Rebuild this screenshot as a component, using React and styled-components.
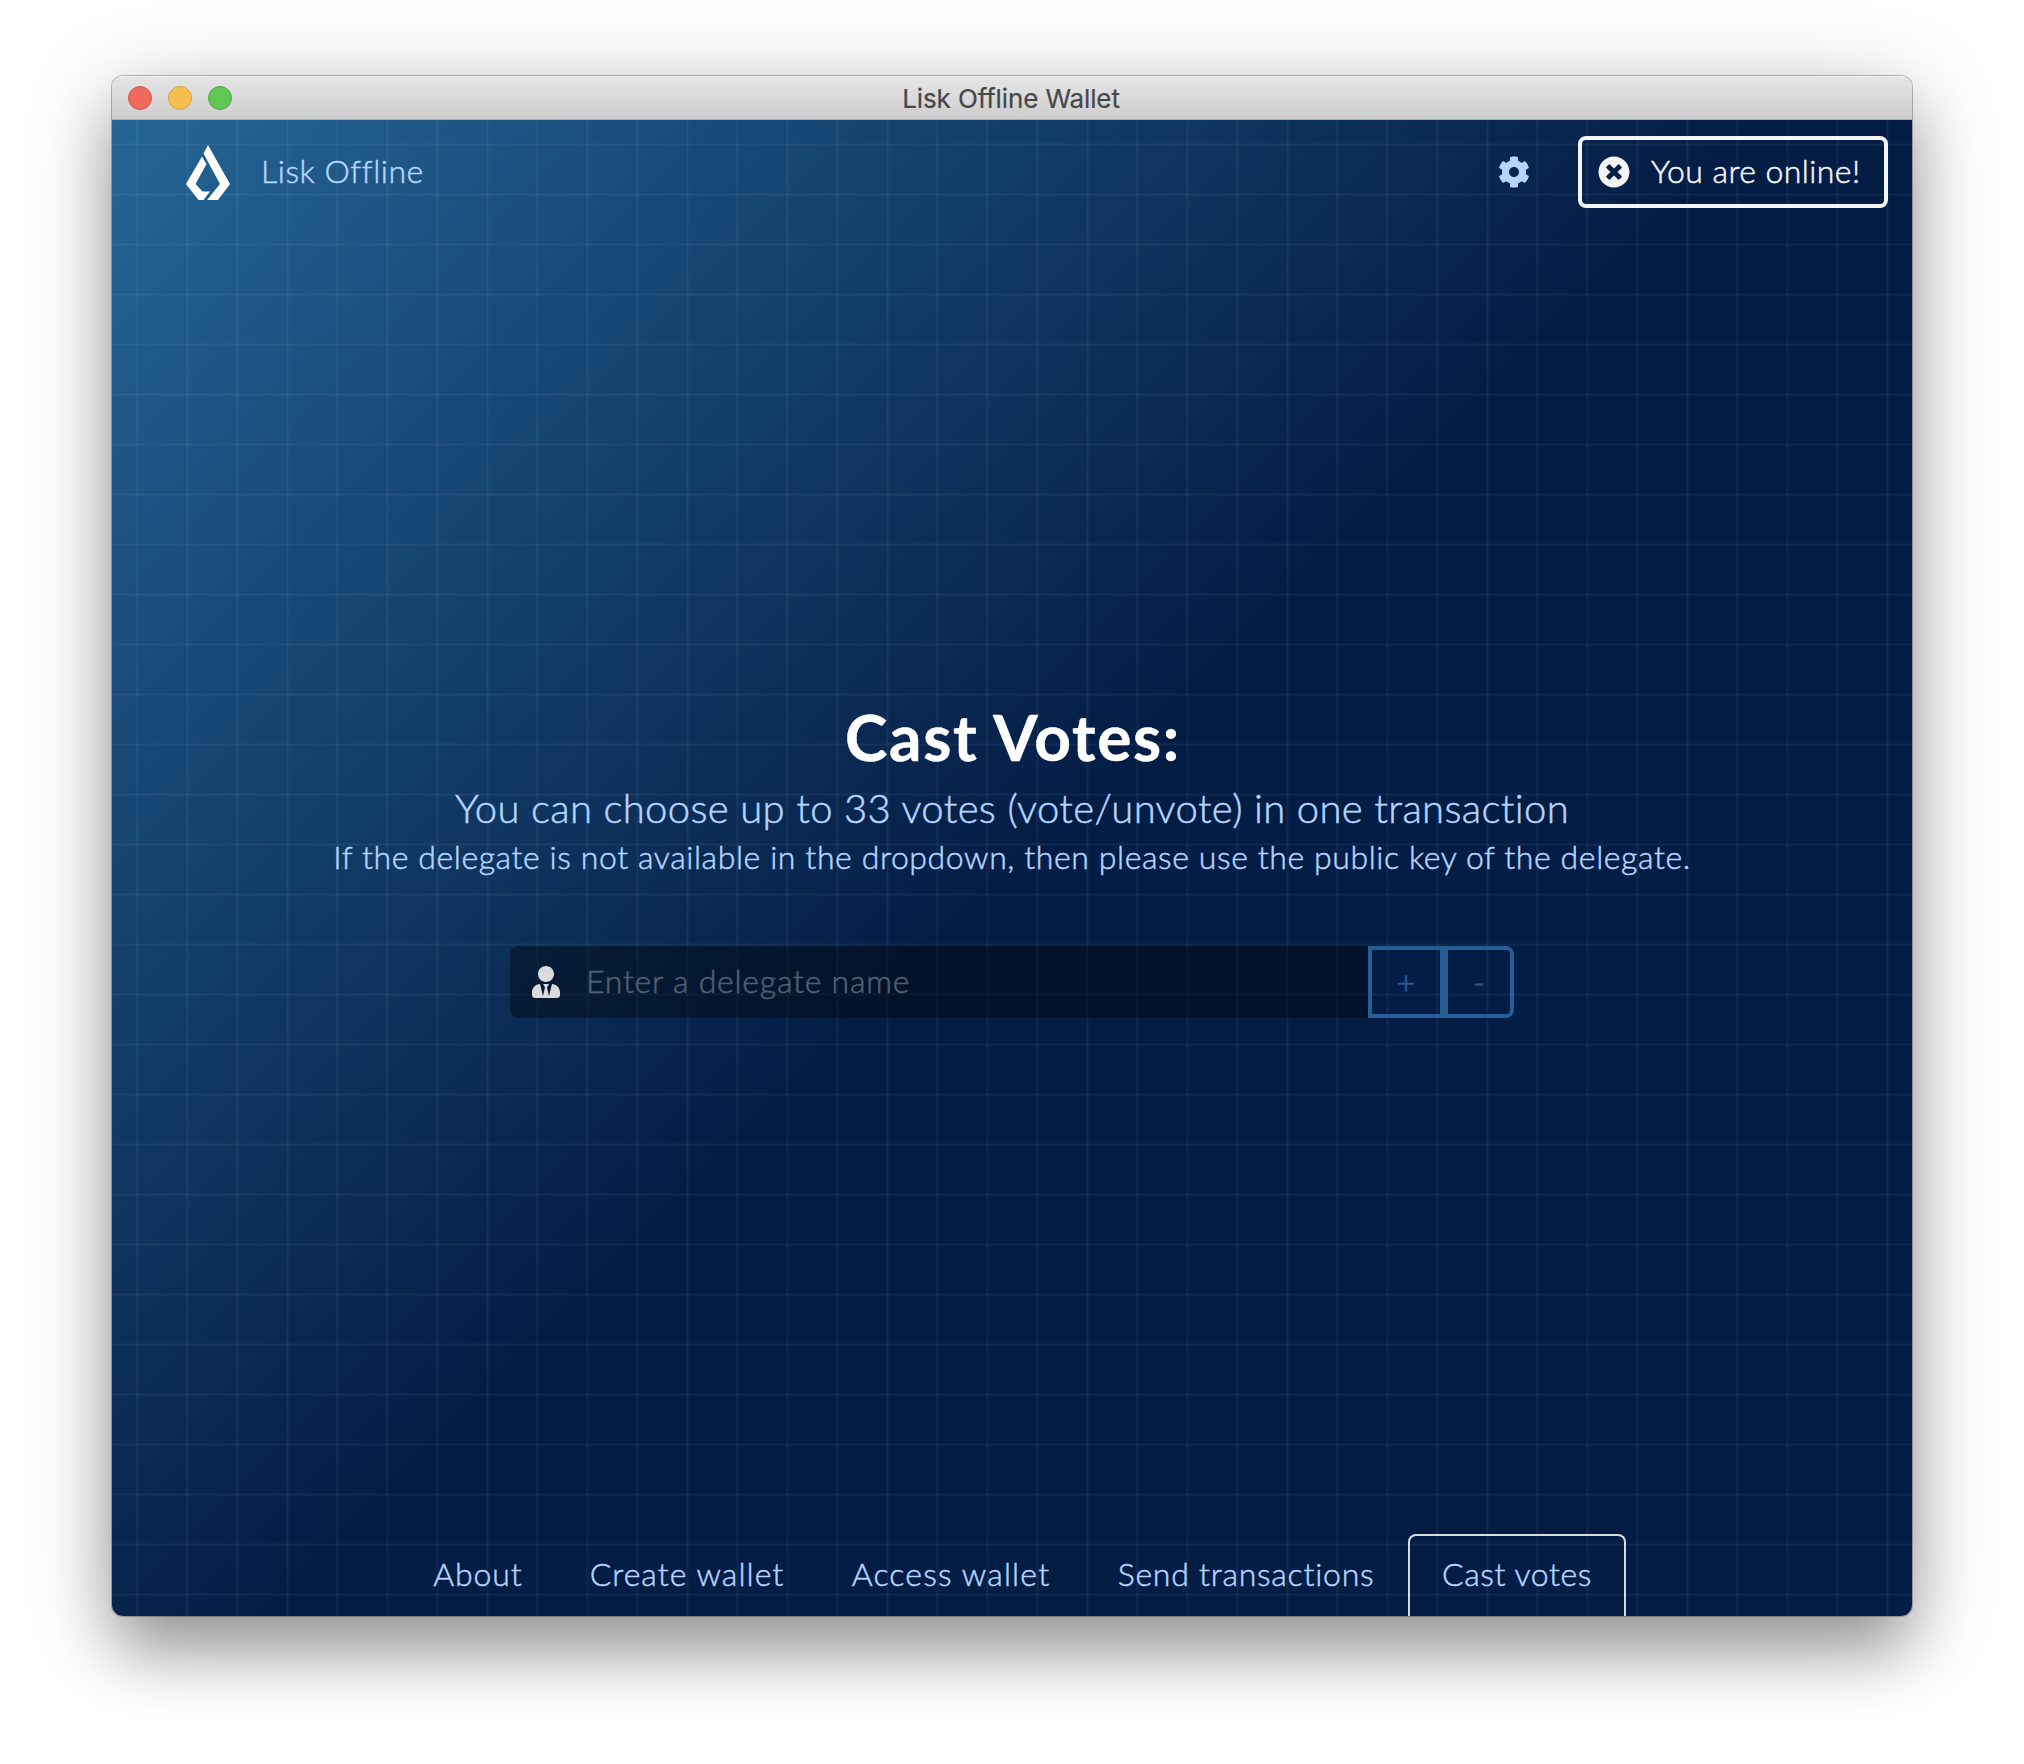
import React from 'react';
import styled, { createGlobalStyle, css } from 'styled-components';
import { FaCog, FaTimesCircle, FaUserTie } from 'react-icons/fa';

const Global = createGlobalStyle`
  *, *::before, *::after { box-sizing: border-box; }
  html, body { margin: 0; padding: 0; background: #fff; }
  body { font-family: Lato, "Open Sans", sans-serif; font-weight: 300; }
`;

const Desktop = styled.div`
  width: 2024px;
  height: 1764px;
  padding: 76px 112px 148px;
  overflow: hidden;
  background: #fff;
`;

const Window = styled.main`
  display: flex;
  flex-direction: column;
  height: 1540px;
  border-radius: 11px;
  overflow: hidden;
  box-shadow: 0 0 0 1px rgba(0, 0, 0, 0.26), 0 40px 64px -4px rgba(0, 0, 0, 0.3), 0 14px 90px rgba(0, 0, 0, 0.23);
`;

const TitleBar = styled.header`
  display: grid;
  grid-template-columns: 1fr auto 1fr;
  align-items: center;
  flex: none;
  height: 44px;
  padding: 0 18px 0 16px;
  background: linear-gradient(#e6e6e6, #cdcdcd);
  border-bottom: 1px solid #aaa;
  box-shadow: inset 0 1px 0 #f3f3f3;
`;

const Lights = styled.div`
  display: flex;
  gap: 16px;
`;

const Light = styled.span`
  width: 24px;
  height: 24px;
  border-radius: 50%;
  background: ${(p) => p.$fill};
  border: 1px solid ${(p) => p.$edge};
`;

const WindowTitle = styled.h1`
  margin: 3px 0 0;
  font: 400 26px/32px Inter, sans-serif;
  letter-spacing: -0.13px;
  color: #474747;
  -webkit-text-stroke: 0.2px currentColor;
`;

const faint = 'rgba(255, 255, 255, 0.022)';
const strong = 'rgba(255, 255, 255, 0.055)';

const Screen = styled.div`
  display: flex;
  flex-direction: column;
  flex: 1;
  background:
    linear-gradient(90deg, transparent 24px, ${faint} 24px, ${faint} 25px, ${strong} 25px, ${strong} 26px, ${faint} 26px, ${faint} 27px, transparent 27px) 0 0 / 50px 50px,
    linear-gradient(transparent 23px, ${faint} 23px, ${faint} 24px, ${strong} 24px, ${strong} 25px, ${faint} 25px, ${faint} 26px, transparent 26px) 0 0 / 50px 50px,
    linear-gradient(135deg, #246596 0%, #041d45 50%);
  color: #b5d5ff;
  -webkit-text-stroke: 0.5px currentColor;
`;

const TopBar = styled.div`
  display: flex;
  align-items: center;
  height: 104px;
  padding: 0 24px 0 74px;
`;

const Brand = styled.span`
  flex: 1;
  margin: -3px 0 0 31px;
  font-size: 32px;
  line-height: 40px;
  letter-spacing: ${(p) => p.$track}px;
`;

const Settings = styled.button`
  display: flex;
  padding: 0;
  margin-right: 48px;
  border: 0;
  background: none;
  color: inherit;
`;

const Status = styled.div`
  display: flex;
  align-items: center;
  width: 310px;
  height: 72px;
  padding: 0 0 0 16px;
  gap: 21px;
  border: 4px solid #f5f5f5;
  border-radius: 8px;
  color: #f5f5f5;
  font-size: 32px;
  line-height: 40px;
  white-space: nowrap;
`;

const Track = styled.span`
  margin-top: -3px;
  letter-spacing: ${(p) => p.$track}px;
`;

const Body = styled.section`
  display: flex;
  flex-direction: column;
  align-items: center;
  flex: 1;
  padding-top: 477px;
  text-align: center;
  white-space: nowrap;
`;

const Heading = styled.h2`
  margin: 0;
  padding-left: 2px;
  font-size: 64px;
  line-height: 72px;
  font-weight: 700;
  letter-spacing: ${(p) => p.$track}px;
  color: #fff;
`;

const Lead = styled.p`
  margin: 7px 0 0;
  font-size: 40px;
  line-height: 56px;
  letter-spacing: ${(p) => p.$track}px;
`;

const Hint = styled.p`
  margin: 0;
  font-size: 32px;
  line-height: 42px;
  letter-spacing: ${(p) => p.$track}px;
`;

const Field = styled.form`
  display: flex;
  width: 1004px;
  height: 72px;
  margin-top: 68px;
`;

const InputBox = styled.label`
  display: flex;
  align-items: center;
  flex: 1;
  padding-left: 20px;
  gap: 24px;
  background: rgba(0, 0, 0, 0.38);
  border-radius: 8px 0 0 8px;
  color: #dbdbdb;
`;

const Input = styled.input`
  flex: 1;
  height: 48px;
  margin-top: -3px;
  padding: 0;
  border: 0;
  outline: 0;
  background: none;
  font: inherit;
  font-size: 32px;
  letter-spacing: ${(p) => p.$track}px;
  color: #dbdbdb;
  &::placeholder { color: #536073; opacity: 1; }
`;

const VoteButton = styled.button`
  width: ${(p) => p.$w}px;
  height: 72px;
  padding: 0 0 2px;
  background: none;
  border: 4px solid #265d97;
  border-radius: ${(p) => (p.$last ? '0 8px 8px 0' : '0')};
  color: #265d97;
  font: inherit;
  font-size: 32px;
  -webkit-text-stroke: 0.7px currentColor;
`;

const Tabs = styled.nav`
  display: flex;
  justify-content: center;
  height: 82px;
  padding-left: 2px;
`;

const Tab = styled.a`
  display: flex;
  justify-content: center;
  width: ${(p) => p.$w}px;
  padding-top: 18px;
  font-size: 32px;
  line-height: 40px;
  letter-spacing: ${(p) => p.$track}px;
  white-space: nowrap;
  border: 2px solid transparent;
  border-bottom: 0;
  ${(p) => p.$active && css`
    border-color: #dbdbdb;
    border-radius: 8px 8px 0 0;
  `}
`;

const tabs = [
  { label: 'About', w: 156, track: 0.9 },
  { label: 'Create wallet', w: 262, track: 1.05 },
  { label: 'Access wallet', w: 266, track: 1.15 },
  { label: 'Send transactions', w: 324, track: 0.75 },
  { label: 'Cast votes', w: 218, track: 0.6, active: true },
];

const Logo = () => (
  <svg width="44" height="55" viewBox="0 0 44 55" fill="#fff">
    <path d="M22 0 44 39 32 55H21L34 39 17.500 8.500Z" />
    <path d="M16 11.500 20.500 19 9.500 39 16.500 46.500H24L17.500 55H12.500L0 39Z" />
  </svg>
);

export default function App() {
  return (
    <Desktop>
      <Global />
      <Window>
        <TitleBar>
          <Lights>
            <Light $fill="#ee6a5e" $edge="#d6544a" />
            <Light $fill="#f5bf4f" $edge="#d8a03a" />
            <Light $fill="#61c654" $edge="#4fa73d" />
          </Lights>
          <WindowTitle>Lisk Offline Wallet</WindowTitle>
        </TitleBar>
        <Screen>
          <TopBar>
            <Logo />
            <Brand $track={0.54}>Lisk Offline</Brand>
            <Settings aria-label="Settings"><FaCog size={32} /></Settings>
            <Status>
              <FaTimesCircle size={32} />
              <Track $track={0.42}>You are online!</Track>
            </Status>
          </TopBar>
          <Body>
            <Heading $track={1.65}>Cast Votes:</Heading>
            <Lead $track={0.35}>You can choose up to 33 votes (vote/unvote) in one transaction</Lead>
            <Hint $track={0.595}>If the delegate is not available in the dropdown, then please use the public key of the delegate.</Hint>
            <Field>
              <InputBox>
                <FaUserTie size={32} />
                <Input placeholder="Enter a delegate name" $track={0.77} />
              </InputBox>
              <VoteButton type="button" $w={76}>+</VoteButton>
              <VoteButton type="button" $w={70} $last>-</VoteButton>
            </Field>
          </Body>
          <Tabs>
            {tabs.map((t) => (
              <Tab key={t.label} $w={t.w} $track={t.track} $active={t.active}>{t.label}</Tab>
            ))}
          </Tabs>
        </Screen>
      </Window>
    </Desktop>
  );
}
